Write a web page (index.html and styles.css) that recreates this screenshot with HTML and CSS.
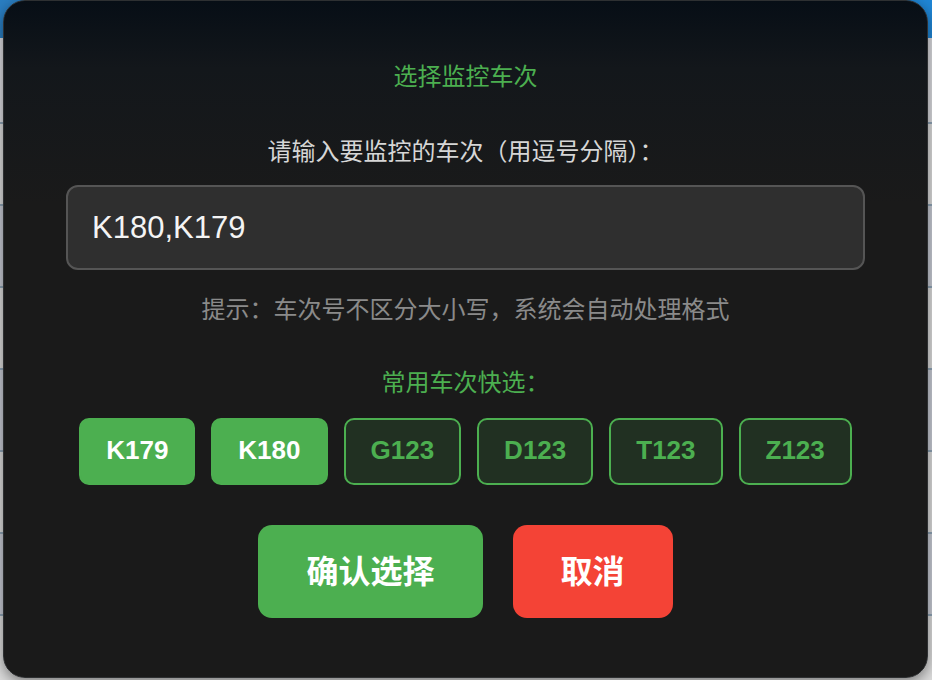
FILE: index.html
```html
<!DOCTYPE html>
<html lang="zh-CN">
<head>
<meta charset="utf-8">
<title>选择监控车次</title>
<link rel="stylesheet" href="styles.css">
</head>
<body>
<div class="page">
  <header class="topbar"></header>
  <div class="intro"></div>
  <div class="rows">
    <div class="row"></div>
    <div class="row alt"></div>
    <div class="row"></div>
    <div class="row alt"></div>
    <div class="row"></div>
    <div class="row alt"></div>
    <div class="row"></div>
  </div>
</div>

<div class="modal">
  <h2 class="title">选择监控车次</h2>
  <p class="label">请输入要监控的车次（用逗号分隔）：</p>
  <input class="train-input" type="text" value="K180,K179">
  <p class="hint">提示：车次号不区分大小写，系统会自动处理格式</p>
  <p class="quick-title">常用车次快选：</p>
  <div class="chips">
    <button class="chip active">K179</button>
    <button class="chip active">K180</button>
    <button class="chip">G123</button>
    <button class="chip">D123</button>
    <button class="chip">T123</button>
    <button class="chip">Z123</button>
  </div>
  <div class="actions">
    <button class="btn confirm">确认选择</button>
    <button class="btn cancel">取消</button>
  </div>
</div>
</body>
</html>
```

FILE: styles.css
```css
* { box-sizing: border-box; }

html, body {
  margin: 0;
  padding: 0;
  width: 932px;
  height: 680px;
  overflow: hidden;
  background: #dcdde0;
  font-family: "Noto Sans CJK SC", "Noto Sans", sans-serif;
}

.page {
  width: 932px;
}

.topbar {
  height: 38px;
  background: linear-gradient(90deg, #2a7ec2, #1f86d6);
}

.intro {
  height: 84px;
  background: #dadbdf;
}

.row {
  height: 82px;
  background: #dcdcdc;
  border-top: 2px solid #8fa4b6;
}

.row.alt {
  background: #c8cbd4;
}

.modal {
  position: absolute;
  left: 3px;
  top: 0;
  width: 925px;
  height: 678px;
  padding: 58px 62px 0;
  border: 1px solid #2e3032;
  border-radius: 22px;
  background: linear-gradient(180deg, #070e16 0%, #13171b 10%, #1a1a1a 30%, #1a1a1a 100%);
  box-shadow: 0 4px 14px rgba(0, 0, 0, 0.45);
  text-align: center;
}

.title {
  margin: 0;
  font-size: 24px;
  line-height: 32px;
  font-weight: normal;
  color: #4caf50;
}

.label {
  margin: 43px 0 0;
  font-size: 24px;
  line-height: 32px;
  color: #d6d6d6;
}

.train-input {
  display: block;
  width: 100%;
  height: 85px;
  margin-top: 19px;
  padding: 0 24px;
  border: 2px solid #555555;
  border-radius: 12px;
  background: #2f2f2f;
  color: #f4f4f4;
  font-family: "Liberation Sans", Arial, sans-serif;
  font-size: 31px;
  outline: none;
}

.hint {
  margin: 22px 0 0;
  font-size: 24px;
  line-height: 32px;
  color: #8a8a8a;
}

.quick-title {
  margin: 41px 0 0;
  font-size: 24px;
  line-height: 32px;
  color: #4caf50;
}

.chips {
  display: flex;
  justify-content: center;
  gap: 16px;
  margin-top: 21px;
}

.chip {
  height: 67px;
  padding: 0 25px 3px;
  border: 2px solid #4caf50;
  border-radius: 10px;
  background: rgba(76, 175, 80, 0.15);
  color: #4caf50;
  font-family: "Liberation Sans", Arial, sans-serif;
  font-weight: bold;
  font-size: 26px;
  line-height: 1;
}

.chip.active {
  background: #4caf50;
  color: #ffffff;
}

.actions {
  display: flex;
  justify-content: center;
  gap: 30px;
  margin-top: 40px;
}

.btn {
  height: 93px;
  padding: 0 48px 6px;
  border: none;
  border-radius: 14px;
  color: #ffffff;
  font-family: "Noto Sans CJK SC", sans-serif;
  font-weight: bold;
  font-size: 32px;
  line-height: 1;
}

.btn.confirm { background: #4caf50; }
.btn.cancel { background: #f44336; }
```
